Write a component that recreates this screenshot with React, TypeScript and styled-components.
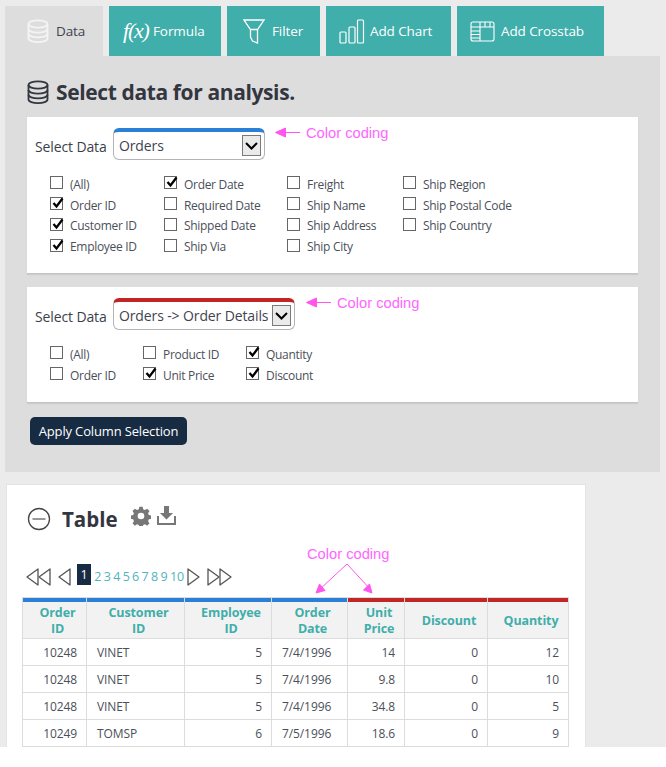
import React from "react";
import styled, { createGlobalStyle } from "styled-components";

const Global = createGlobalStyle`
  html, body { margin: 0; padding: 0; background: #fff; }
  body { font-family: "Open Sans", "Noto Sans", sans-serif; color: #3b3f4a; }
  * { box-sizing: border-box; }
`;
const Page = styled.div`
  width: 666px; height: 747px; background: #ebebeb; overflow: hidden;
  padding: 6px 6px 0 5px; position: relative;
`;
const Tabs = styled.div`display: flex; gap: 6px; height: 50px;`;
const Tab = styled.div<{ $w: number; $active?: boolean; $gap?: number; $pad?: number }>`
  width: ${p => p.$w}px; height: 50px; display: flex; align-items: center;
  padding-left: ${p => p.$pad ?? 10}px; gap: ${p => p.$gap ?? 6}px;
  background: ${p => (p.$active ? "#dddddd" : "#40aeaa")};
  color: ${p => (p.$active ? "#3f4350" : "#fff")};
  font-size: 13.5px;
  letter-spacing: -0.1px;
`;
const FxGlyph = styled.span`
  font-family: "Liberation Serif", serif; font-style: italic; font-size: 22px; color: #fff;
  letter-spacing: -1.2px; width: 25px; white-space: nowrap;
`;
const Panel = styled.section`
  height: 416px; background: #dddddd; padding: 19px 22px 0 22px;
`;
const Heading = styled.h2`
  margin: 0 0 9px; height: 33px; display: flex; align-items: center; gap: 7px;
  font-size: 21px; font-weight: 700; color: #33363f; letter-spacing: -0.38px;
`;
const Card = styled.div<{ $h: number; $mb: number }>`
  height: ${p => p.$h}px; margin-bottom: ${p => p.$mb}px; width: 611px; background: #fff;
  border-bottom: 1px solid #c4c4c4; padding: 11px 8px 0 8px; box-shadow: 0 1px 1px #ccc;
`;
const SelectRow = styled.div`display: flex; align-items: center; gap: 7px; font-size: 14px; letter-spacing: -0.12px;`;
const SelectLabel = styled.span`padding-top: 5px; width: 71px; white-space: nowrap;`;
const Picker = styled.div<{ $color: string; $w: number }>`
  width: ${p => p.$w}px; height: 32px; border: 1px solid #b4b4b4; border-top: 4px solid ${p => p.$color};
  border-radius: 6px; background: #fff; display: flex; align-items: center; justify-content: space-between;
  padding: 0 3px 0 5px; font-size: 14px; color: #3f4350; letter-spacing: -0.12px; white-space: nowrap;
`;
const Caret = styled.span`
  width: 19px; height: 21px; background: #eaeaea; border: 1px solid #7a7a7a; display: flex;
  align-items: center; justify-content: center; flex: none;
`;
const Columns = styled.div<{ $cols: string; $mt: number }>`
  display: grid; grid-template-columns: ${p => p.$cols}; grid-auto-flow: column;
  grid-template-rows: repeat(4, 20.8px); margin: ${p => p.$mt}px 0 0 15px;
`;
const CheckItem = styled.div`
  display: flex; align-items: center; gap: 7px; font-size: 12px; color: #4b4f5a; letter-spacing: -0.3px; white-space: nowrap;
`;
const Box = styled.span`
  width: 13px; height: 13px; background: #fff; border: 1px solid #666; position: relative; flex: none; margin-top: -3px;
`;
const Apply = styled.button`
  margin-left: 3px; width: 157px; height: 28px; border: 0; border-radius: 5px; background: #172b42; color: #fff;
  font: 13px "Open Sans", sans-serif; letter-spacing: -0.15px; padding: 0;
`;
const Annotation = styled.span<{ $x: number; $y: number }>`
  position: absolute; left: ${p => p.$x}px; top: ${p => p.$y}px;
  font: 14.7px "Liberation Sans", sans-serif; color: #ff66ff; line-height: 16px; white-space: nowrap;
`;
const Overlay = styled.svg`position: absolute; left: 0; top: 0; pointer-events: none;`;
const TableCard = styled.section`
  margin: 12px 0 0 1px; width: 580px; height: 300px; background: #fff; padding: 17px 17px 0 15px;
  border: 1px solid #e4e4e4;
`;
const TableTitle = styled.div`
  display: flex; align-items: center; height: 34px; margin-left: 5px;
`;
const TitleText = styled.h3`
  margin: 0 0 0 11px; font-size: 20.5px; font-weight: 700; color: #33363f;
`;
const TitleTools = styled.div`display: flex; gap: 6px; margin: -7px 0 0 13px; align-items: center;`;
const Pager = styled.div`
  display: flex; align-items: center; height: 21px; margin: 28px 0 0 4px; font-size: 12.5px; color: #4fb4bc;
`;
const PagerIcons = styled.span<{ $mx?: string }>`
  display: inline-flex; gap: 0; padding-top: 5px; margin: ${p => p.$mx ?? "0"};
  & > svg + svg { margin-left: -1px; }
`;
const PageNums = styled.div`display: flex; align-items: center; gap: 2.3px; margin: 0 3px 0 6px;`;
const PageNum = styled.span<{ $active?: boolean }>`
  ${p => p.$active ? "background:#172b42;color:#fff;width:14px;height:21px;margin-right:1px;" : "padding-top:3px;"}
  display: inline-flex; align-items: center; justify-content: center; line-height: 21px;
`;
const Grid = styled.table`
  border-collapse: collapse; table-layout: fixed; width: 546px; margin-top: 12px; font-size: 12px;
  color: #4b4f5a; letter-spacing: -0.1px;
`;
const Head = styled.th<{ $color: string }>`
  height: 41px; padding: 6px 1px 0 7px; background: #f2f2f2; color: #40aeaa; font-size: 12.5px; font-weight: 700; line-height: 16px;
  text-align: center; border: 1px solid #dcdcdc; box-shadow: inset 0 4px 0 ${p => p.$color};
`;
const Cell = styled.td<{ $left?: boolean }>`
  height: 27px; padding: 0 ${p => (p.$left ? 10 : 9)}px 0 ${p => (p.$left ? 10 : 4)}px;
  text-align: ${p => (p.$left ? "left" : "right")}; border: 1px solid #dcdcdc;
`;

const Db = ({ c, fill }: { c: string; fill?: string }) => (
  <svg width="22" height="24" viewBox="0 0 22 24" fill={fill ?? "none"} stroke={c} strokeWidth="1.8">
    <ellipse cx="11" cy="5" rx="9.5" ry="3.6" />
    <path d="M1.5 5v14.5c0 2 4.2 3.6 9.5 3.6s9.500-1.600 9.500-3.600V5" />
    <path d="M1.500 10c0 2 4.200 3.600 9.500 3.600s9.500-1.600 9.500-3.600M1.500 14.800c0 2 4.200 3.600 9.500 3.600s9.500-1.600 9.500-3.600" />
  </svg>
);
const Funnel = () => (
  <svg width="22" height="26" viewBox="0 0 22 26" fill="none" stroke="#fff" strokeWidth="1.3">
    <path d="M1 2h20l-6.500 9.500H7.500zM7.500 11.500h7V25l-5-2-2-4z" />
  </svg>
);
const Bars = () => (
  <svg width="26" height="25" viewBox="0 0 26 25" fill="none" stroke="#fff" strokeWidth="1.2">
    <rect x="1" y="13" width="6" height="11" rx="1" /><rect x="10" y="8" width="6" height="16" rx="1" /><rect x="18.500" y="1" width="6" height="23" rx="1" />
  </svg>
);
const Cross = () => (
  <svg width="25" height="21" viewBox="0 0 25 21" fill="none" stroke="#fff" strokeWidth="1.1">
    <rect x="1" y="1" width="23" height="19" rx="2" />
    <path d="M1 6h23M10 1v19M15 1v5M20 1v5M1 10h9M1 13.500h9M1 17h9" />
  </svg>
);
const Tick = () => (
  <svg width="14" height="14" viewBox="0 0 14 14" style={{ position: "absolute", left: 0, top: -2 }}>
    <path d="M2.500 7l3 3.500L11.500 2.500" fill="none" stroke="#000" strokeWidth="2.300" />
  </svg>
);
const Chevron = () => (
  <svg width="13" height="8" viewBox="0 0 13 8"><path d="M1 1l5.500 5.500L12 1" fill="none" stroke="#000" strokeWidth="2" /></svg>
);
const Check = ({ label, on }: { label: string; on?: boolean }) => (
  <CheckItem><Box>{on && <Tick />}</Box>{label}</CheckItem>
);
const Tri = ({ flip }: { flip?: boolean }) => (
  <svg width="13" height="18" viewBox="0 0 13 18" style={flip ? { transform: "scaleX(-1)" } : undefined}>
    <path d="M12 1v16L1 9z" fill="#fff" stroke="#555" strokeWidth="1.300" strokeLinejoin="round" />
  </svg>
);

const headers: [string[], string, number][] = [
  [["Order", "ID"], "#2a7fd6", 64], [["Customer", "ID"], "#2a7fd6", 98], [["Employee", "ID"], "#2a7fd6", 87],
  [["Order", "Date"], "#2a7fd6", 76], [["Unit", "Price"], "#c12525", 57], [["Discount"], "#c12525", 83], [["Quantity"], "#c12525", 81],
];
const rows = [
  ["10248", "VINET", "5", "7/4/1996", "14", "0", "12"],
  ["10248", "VINET", "5", "7/4/1996", "9.8", "0", "10"],
  ["10248", "VINET", "5", "7/4/1996", "34.8", "0", "5"],
  ["10249", "TOMSP", "6", "7/5/1996", "18.6", "0", "9"],
  ["", "", "", "", "", "", ""],
];

export default function App() {
  return (
    <>
      <Global />
      <Page>
        <Tabs>
          <Tab $w={98} $active $pad={22} $gap={7}><Db c="#f4f4f4" />Data</Tab>
          <Tab $w={112} $pad={14} $gap={5}><FxGlyph>f(x)</FxGlyph>Formula</Tab>
          <Tab $w={93} $pad={16} $gap={7}><Funnel />Filter</Tab>
          <Tab $w={125} $pad={13} $gap={5}><Bars />Add Chart</Tab>
          <Tab $w={147} $pad={13} $gap={6}><Cross />Add Crosstab</Tab>
        </Tabs>
        <Panel>
          <Heading><Db c="#33363f" />Select data for analysis.</Heading>
          <Card $h={157} $mb={13}>
            <SelectRow><SelectLabel>Select Data</SelectLabel><Picker $color="#2a7fd6" $w={152}>Orders<Caret><Chevron /></Caret></Picker></SelectRow>
            <Columns $cols="114px 123px 116px 120px" $mt={14}>
              <Check label="(All)" /><Check label="Order ID" on /><Check label="Customer ID" on /><Check label="Employee ID" on />
              <Check label="Order Date" on /><Check label="Required Date" /><Check label="Shipped Date" /><Check label="Ship Via" />
              <Check label="Freight" /><Check label="Ship Name" /><Check label="Ship Address" /><Check label="Ship City" />
              <Check label="Ship Region" /><Check label="Ship Postal Code" /><Check label="Ship Country" />
            </Columns>
          </Card>
          <Card $h={116} $mb={14}>
            <SelectRow><SelectLabel>Select Data</SelectLabel><Picker $color="#c12525" $w={182}>Orders -&gt; Order Details<Caret><Chevron /></Caret></Picker></SelectRow>
            <Columns $cols="93px 103px 100px" $mt={14}>
              <Check label="(All)" /><Check label="Order ID" />
              <span /><span />
              <Check label="Product ID" /><Check label="Unit Price" on />
              <span /><span />
              <Check label="Quantity" on /><Check label="Discount" on />
            </Columns>
          </Card>
          <Apply>Apply Column Selection</Apply>
        </Panel>
        <TableCard>
          <TableTitle>
            <svg width="24" height="24" viewBox="0 0 24 24" fill="none"><circle cx="12" cy="12" r="10.500" stroke="#444" strokeWidth="1.300" /><path d="M5.500 12h13" stroke="#999" strokeWidth="2" /></svg>
            <TitleText>Table</TitleText>
            <TitleTools>
              <svg width="20" height="20" viewBox="0 0 24 24" fill="#777"><path fillRule="evenodd" d="M10 1h4l.6 3 2.200.9 2.600-1.700 2.800 2.800-1.700 2.600.9 2.200 3 .6v4l-3 .6-.9 2.200 1.700 2.600-2.800 2.800-2.600-1.700-2.200.9-.6 3h-4l-.6-3-2.200-.9-2.600 1.700-2.800-2.800 1.700-2.600-.9-2.200-3-.6v-4l3-.6.9-2.200-1.700-2.600 2.800-2.800 2.600 1.700 2.200-.9zM12 8a4 4 0 100 8 4 4 0 000-8z" /></svg>
              <svg width="19" height="19" viewBox="0 0 19 19" fill="none"><path d="M7 0h5v7h4l-6.500 6.500L3 7h4z" fill="#777" /><path d="M1 10v8h17v-8" stroke="#777" strokeWidth="2" /></svg>
            </TitleTools>
          </TableTitle>
          <Pager>
            <PagerIcons><Tri /><Tri /></PagerIcons>
            <PagerIcons $mx="0 0 0 7px"><Tri /></PagerIcons>
            <PageNums>
              <PageNum $active>1</PageNum>
              {[2, 3, 4, 5, 6, 7, 8, 9, 10].map(n => <PageNum key={n}>{n}</PageNum>)}
            </PageNums>
            <PagerIcons><Tri flip /></PagerIcons>
            <PagerIcons $mx="0 0 0 7px"><Tri flip /><Tri flip /></PagerIcons>
          </Pager>
          <Grid>
            <colgroup>{headers.map(([, , w], i) => <col key={i} style={{ width: w }} />)}</colgroup>
            <thead>
              <tr>{headers.map(([l, c], i) => <Head key={i} $color={c}>{l.map((t, j) => <React.Fragment key={j}>{j > 0 && <br />}{t}</React.Fragment>)}</Head>)}</tr>
            </thead>
            <tbody>
              {rows.map((r, i) => <tr key={i}>{r.map((v, j) => <Cell key={j} $left={j === 1 || j === 3}>{v}</Cell>)}</tr>)}
            </tbody>
          </Grid>
        </TableCard>
        <Annotation $x={306} $y={125}>Color coding</Annotation>
        <Annotation $x={337} $y={295}>Color coding</Annotation>
        <Annotation $x={307} $y={546}>Color coding</Annotation>
        <Overlay width="666" height="747" viewBox="0 0 666 747">
          <g stroke="#ff55ee" strokeWidth="1" fill="#ff55ee">
            <path d="M283 132.500h17M314 302.500h17M347 564l-28 26M347 564l24 26" fill="none" />
            <path d="M275.500 132.500l10-4.500v9zM306.500 302.500l10-4.500v9zM316 593l3.500-9 5.500 6.500zM372 593l-8.500-3 6-6z" />
          </g>
        </Overlay>
      </Page>
    </>
  );
}
